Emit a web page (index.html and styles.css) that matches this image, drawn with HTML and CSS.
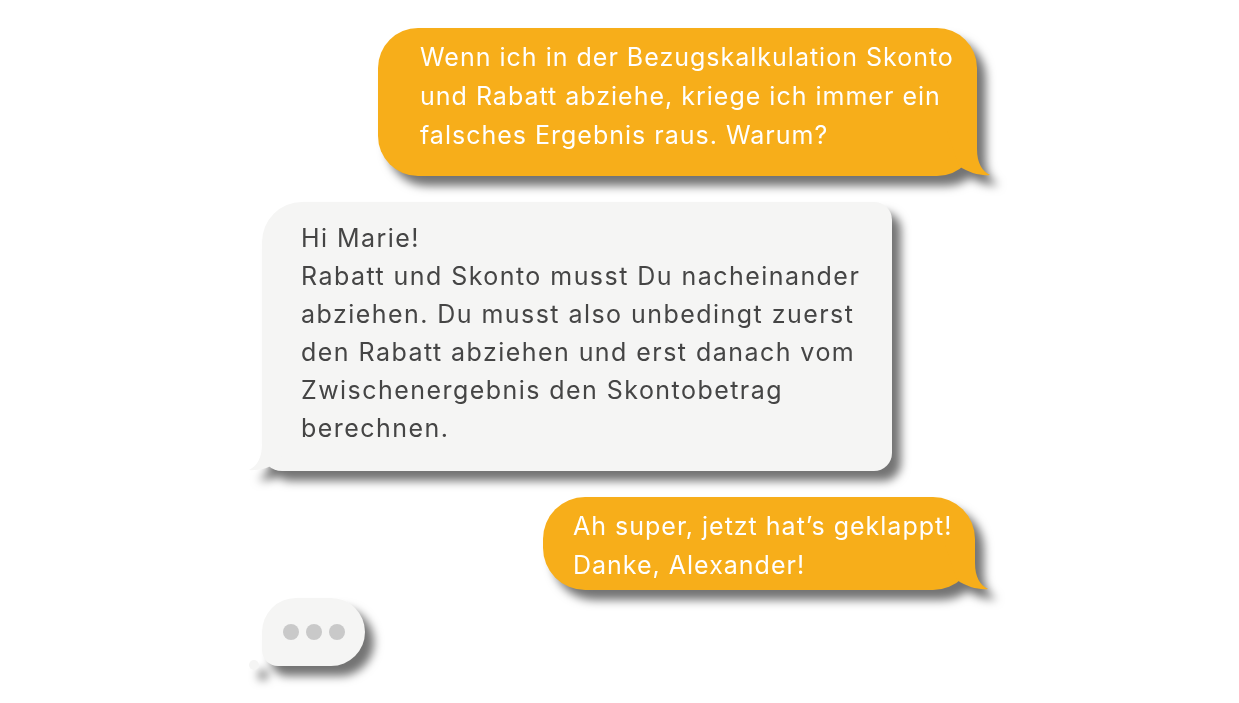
FILE: index.html
```html
<!DOCTYPE html>
<html lang="de">
<head>
<meta charset="utf-8">
<title>Chat</title>
<link rel="stylesheet" href="styles.css">
</head>
<body>
<div class="chat">
  <div class="msg msg-out msg-first">
    <p class="text">Wenn ich in der Bezugskalkulation Skonto<br>und Rabatt abziehe, kriege ich immer ein<br>falsches Ergebnis raus. Warum?</p>
    <svg class="tail tail-right" viewBox="0 0 46 45" width="46" height="45"><path d="M0 0 L30 0 L30 18 C30 32 35 40 43 44 C34 45 22 42 12 35 Z"/></svg>
  </div>
  <div class="msg msg-in msg-answer">
    <p class="text">Hi Marie!<br>Rabatt und Skonto musst Du nacheinander<br>abziehen. Du musst also unbedingt zuerst<br>den Rabatt abziehen und erst danach vom<br>Zwischenergebnis den Skontobetrag<br>berechnen.</p>
    <svg class="tail tail-left" viewBox="0 0 46 45" width="46" height="45"><path d="M0 0 L30 0 L30 18 C30 32 35 40 43 44 C34 45 22 42 12 35 Z"/></svg>
  </div>
  <div class="msg msg-out msg-thanks">
    <p class="text">Ah super, jetzt hat’s geklappt!<br>Danke, Alexander!</p>
    <svg class="tail tail-right" viewBox="0 0 46 45" width="46" height="45"><path d="M0 0 L30 0 L30 18 C30 32 35 40 43 44 C34 45 22 42 12 35 Z"/></svg>
  </div>
  <div class="msg msg-in typing">
    <span class="dot"></span><span class="dot"></span><span class="dot"></span>
  </div>
</div>
</body>
</html>
```

FILE: styles.css
```css
html, body {
  margin: 0;
  padding: 0;
  background: #ffffff;
}

body {
  font-family: Inter, "Open Sans", "Liberation Sans", sans-serif;
  font-size: 25px;
  width: 1239px;
  height: 703px;
  overflow: hidden;
}

.chat {
  display: flex;
  flex-direction: column;
  align-items: flex-start;
  width: 715px;
  margin-left: 262px;
  padding-top: 28px;
}

.msg {
  position: relative;
  box-sizing: border-box;
  filter: drop-shadow(9px 10px 5px rgba(0, 0, 0, 0.55));
}

.text {
  margin: 0;
  white-space: nowrap;
}

.msg-out {
  align-self: flex-end;
  background: #f7ae1a;
  color: #ffffff;
  letter-spacing: 1px;
}

.msg-out .tail {
  fill: #f7ae1a;
}

.msg-in {
  background: #f5f5f4;
  color: #454545;
  letter-spacing: 1.45px;
}

.msg-in .tail {
  fill: #f5f5f4;
}

.tail {
  position: absolute;
  bottom: 0;
  display: block;
}

.tail-right {
  right: -16px;
}

.tail-left {
  left: -16px;
  transform: scaleX(-1);
}

.msg-first {
  width: 599px;
  height: 148px;
  padding: 10px 0 0 42px;
  border-radius: 40px;
  line-height: 39px;
}

.msg-answer {
  margin-top: 26px;
  width: 630px;
  height: 269px;
  padding: 17px 0 0 39px;
  border-radius: 40px 18px 18px 20px;
  line-height: 38px;
}

.msg-thanks {
  margin-top: 26px;
  margin-right: 2px;
  width: 432px;
  height: 93px;
  padding: 10px 0 0 30px;
  border-radius: 42px;
  line-height: 39px;
}

.typing {
  margin-top: 8px;
  width: 103px;
  height: 68px;
  border-radius: 34px 34px 34px 16px;
  display: flex;
  align-items: center;
  justify-content: center;
  gap: 7px;
}

.typing::after {
  content: "";
  position: absolute;
  left: -13px;
  bottom: -4px;
  width: 10px;
  height: 10px;
  border-radius: 50%;
  background: #f5f5f4;
}

.dot {
  width: 16px;
  height: 16px;
  border-radius: 50%;
  background: #c9c9c9;
}
```
